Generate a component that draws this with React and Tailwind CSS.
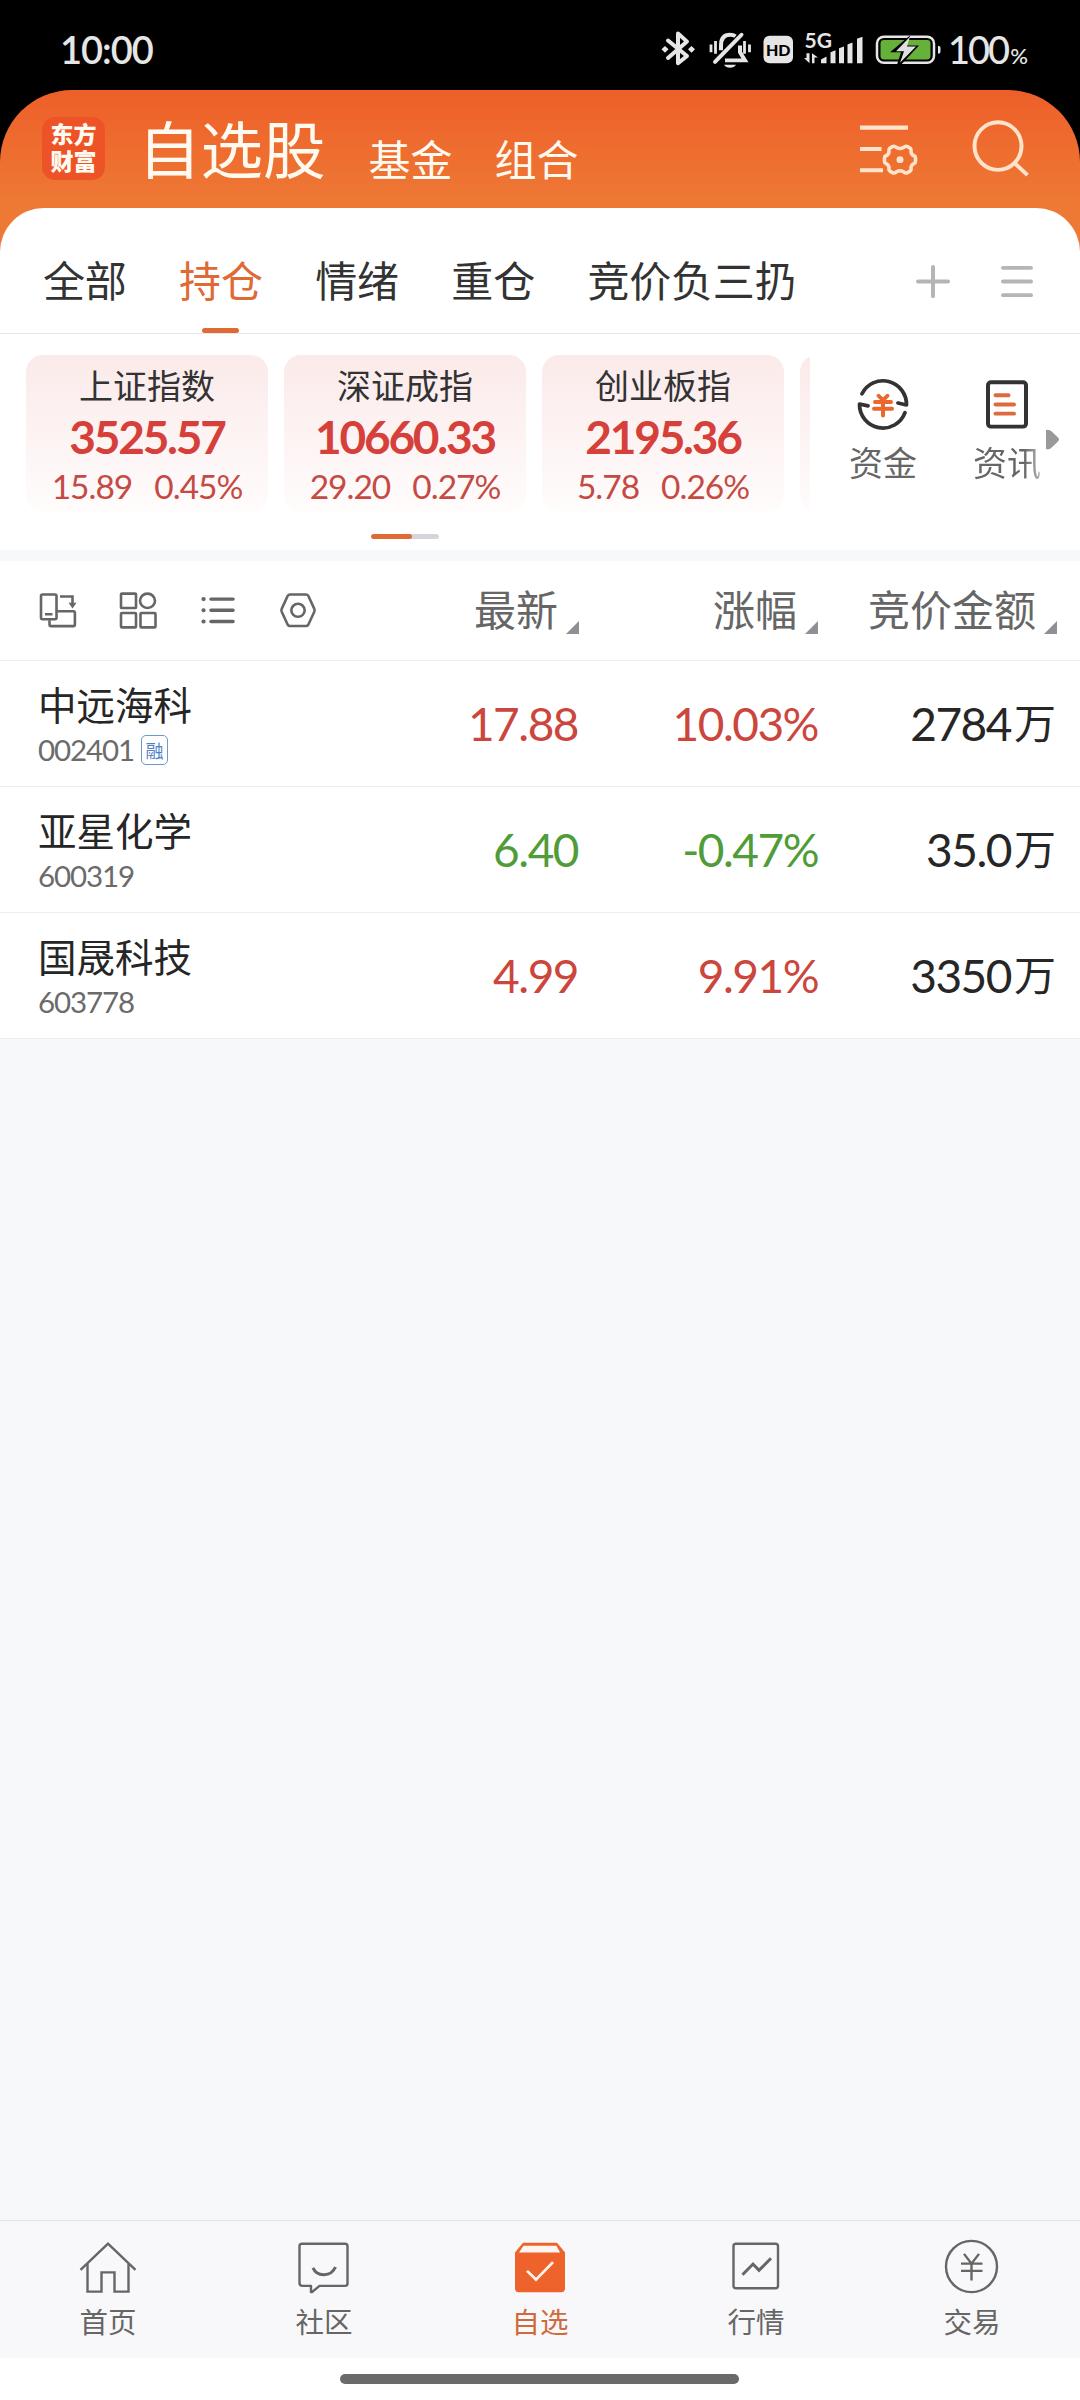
const indices = [
  { name: '上证指数', value: '3525.57', change: '15.89', percent: '0.45%' },
  { name: '深证成指', value: '10660.33', change: '29.20', percent: '0.27%' },
  { name: '创业板指', value: '2195.36', change: '5.78', percent: '0.26%' },
]

const stocks = [
  { name: '中远海科', code: '002401', margin: true, price: '17.88', percent: '10.03%', amount: '2784', up: true },
  { name: '亚星化学', code: '600319', price: '6.40', percent: '-0.47%', amount: '35.0', up: false },
  { name: '国晟科技', code: '603778', price: '4.99', percent: '9.91%', amount: '3350', up: true },
]

const groups = ['全部', '持仓', '情绪', '重仓', '竞价负三扔']

function StatusBar() {
  return (
    <div className="flex h-[90px] shrink-0 items-start bg-black pt-[28px] pl-[60px] text-[#e6e6e6]">
      <div className="h-[44px] w-[598px] font-['Lato','Noto_Sans_CJK_SC',sans-serif] text-[38px] leading-[43px] font-semibold tracking-[-1px]">10:00</div>
      <svg width="288" height="44.5" viewBox="658 29 288 46" preserveAspectRatio="none" fill="none" stroke="#e6e6e6" strokeWidth="4">
        {/* bluetooth */}
        <path d="M668 42 687 58 678 65.500V34.500L687 43 668 60" strokeLinejoin="round" strokeLinecap="round" />
        <path d="M661.5 51l3.500-3.500 3.500 3.500-3.500 3.500zM688 51l3.500-3.500 3.500 3.500-3.500 3.500z" fill="#e6e6e6" stroke="none" />
        {/* muted bell */}
        <path d="M741.500 36 715 64" strokeLinecap="round" />
        <path d="M721 52V47Q721 36 730 36q3.500 0 5.500 1.500M740 47v7l5 8.500H725" strokeWidth="4" />
        <path d="M724 67h12c-2 4-10 4-12 0z" fill="#e6e6e6" stroke="none" />
        <path d="M711 46v8M715.500 42.500v13M744.500 42.500v13M749.500 46v8" strokeWidth="2.800" />
        <rect x="763.500" y="37" width="29.500" height="28.500" rx="6" fill="#e6e6e6" stroke="none" />
        <text x="778.200" y="57.500" textAnchor="middle" fontSize="16" fontWeight="900" fontFamily="Lato" fill="#000" stroke="none">HD</text>
        <text x="804.500" y="50" fontSize="21" fontWeight="700" fontFamily="Lato" fill="#e6e6e6" stroke="none">5G</text>
        <path d="M804 60h2.500v-5h3v10.500zM812 65.500h2.500v-6h3.500L812 55z" fill="#e6e6e6" stroke="none" />
        <path d="M821 65.500v-4l5.500-3v7zM830.500 65.500V54l5-2v13.500zM839 65.500V50l5-2v17.500zM847.500 65.500V46l5-2v21.500zM857 65.500V40l5.500-2v27.500z" fill="#e6e6e6" stroke="none" />
        {/* battery */}
        <rect x="877" y="38" width="57" height="27" rx="7" strokeWidth="2.500" />
        <rect x="880.500" y="41.500" width="50" height="20" rx="3.500" fill="#65b13a" stroke="none" />
        <path d="M938 47.500c2.500 0 2.500 1 2.500 4s0 4-2.500 4z" fill="#e6e6e6" stroke="none" />
        <path d="M912 35 890 54h11l-4 13h4l18-20h-13l5-12z" fill="#000" stroke="none" />
        <path d="M910 38 896 53h8l-4 12 16-17h-9z" fill="#e0e0e0" stroke="none" />
      </svg>
      <div className="flex items-baseline font-['Lato','Noto_Sans_CJK_SC',sans-serif]">
        <span className="ml-[2px] text-[38px] leading-[43px] font-medium tracking-[-2px]">100</span>
        <span className="ml-[2px] text-[22px] font-medium">%</span>
      </div>
    </div>
  )
}

function Header() {
  return (
    <div className="shrink-0 bg-black">
      <header className="flex h-[168px] items-start rounded-t-[72px] bg-linear-to-b from-[#ee5f29] to-[#ee7935] to-70% pl-[42px] text-[#fffaf0]">
        <div className="mt-[27px] flex h-[63px] w-[63px] justify-center rounded-[13px] bg-[#ee5328] pt-[3px]">
          <div className="w-[47px] text-center text-[23px] leading-[27px] font-black break-all">东方财富</div>
        </div>
        <h1 className="mt-[17px] ml-[33px] text-[62.500px] leading-[80px]">自选股</h1>
        <nav className="mt-[38px] ml-[43px] flex gap-[42px] text-[42px] leading-[60px]">
          <span>基金</span>
          <span>组合</span>
        </nav>
        <svg className="mt-[26px] ml-[278px]" width="62" height="64" viewBox="0 0 62 66" preserveAspectRatio="none" fill="none" stroke="#ffe3cb" strokeWidth="4.200">
          <path d="M3 12h48M3 34h21.500M3 56h23" />
          <path
            d="M35.500 31.500q2-1 4 1 3.500 2 7 0 2-2 4-1l3 2q1 1 .5 3.500.5 3 3 4 1.500.5 1.500 2v4q0 1.500-1.500 2-2.500 1-3 4 .5 2.500-.5 3.500l-3 2q-2 1-4-1-3.500-2-7 0-2 2-4 1l-3-2q-1-1-.5-3.500-.5-3-3-4-1.500-.5-1.500-2v-4q0-1.500 1.500-2 2.500-1 3-4-.5-2.500.5-3.500z"
            strokeLinejoin="round"
            strokeWidth="3.600"
          />
          <circle cx="43" cy="45" r="3.500" fill="#ffe3cb" stroke="none" />
        </svg>
        <svg className="mt-[26px] ml-[49px]" width="66" height="64" viewBox="0 0 66 66" preserveAspectRatio="none" fill="none" stroke="#ffe3cb" strokeWidth="4">
          <ellipse cx="30" cy="31" rx="23.500" ry="24.500" />
          <path d="M46.500 48.500 59.500 61" />
        </svg>
      </header>
    </div>
  )
}

function GroupTabs() {
  return (
    <div className="-mt-[50px] flex h-[126px] shrink-0 rounded-t-[44px] border-b border-[#e6e8ea] bg-white pl-[43px]">
      <div className="flex w-[868px] gap-[52.500px] text-[42px] leading-[60px] tracking-[-0.2px] text-[#333]">
        {groups.map((g) => (
          <div key={g} className={g === '持仓' ? 'flex flex-col items-center text-[#e06a36]' : ''}>
            <div className="mt-[41px]">{g}</div>
            {g === '持仓' && <div className="mt-[19px] h-[5px] w-[37px] rounded-full bg-[#e06a36]" />}
          </div>
        ))}
      </div>
      <svg className="mt-[53px]" width="126" height="41" viewBox="0 0 126 42" preserveAspectRatio="none" stroke="#b5b5b5" strokeWidth="4" strokeLinecap="round">
        <path d="M7 21h30M22 6v30M92 7h28M92 21h28M92 35h28" />
      </svg>
    </div>
  )
}

function IndexCard({ item }) {
  return (
    <div className="flex h-[157px] w-[242px] shrink-0 flex-col items-center rounded-[17px] bg-linear-to-b from-[#fbeaea] to-[#fffcfc]">
      <div className="mt-[7px] text-[34px] leading-[46px] text-[#333]">{item.name}</div>
      <div className="mt-[4px] font-['Lato','Noto_Sans_CJK_SC',sans-serif] text-[46px] leading-[50px] font-bold tracking-[-2.2px] text-[#d5413a]">{item.value}</div>
      <div className="mt-[6px] flex gap-[22px] font-['Lato','Noto_Sans_CJK_SC',sans-serif] text-[33.500px] leading-[36px] tracking-[-1px] text-[#c44a43]">
        <span>{item.change}</span>
        <span>{item.percent}</span>
      </div>
    </div>
  )
}

function Overview() {
  return (
    <section className="h-[216px] shrink-0 bg-white pt-[21px]">
      <div className="flex">
        <div className="flex w-[810px] gap-[16px] overflow-hidden pl-[26px]">
          {indices.map((item) => <IndexCard key={item.name} item={item} />)}
          <div className="h-[157px] w-[242px] shrink-0 rounded-[17px] bg-linear-to-b from-[#fbeaea] to-[#fffcfc]" />
        </div>
        <div className="mt-[19px] ml-[39px] flex w-[68px] flex-col items-center text-[34px] leading-[48px] text-[#666]">
          <svg width="60" height="58" viewBox="0 0 60 60" preserveAspectRatio="none" fill="none" stroke="#333" strokeWidth="3.800" strokeLinejoin="round" strokeLinecap="round">
            <path d="M9 20.500A23.500 24.500 0 0 1 53.500 32L45 30M52 40A23.500 24.500 0 0 1 6.500 31L15 33" />
            <path d="M25.500 22.500 30 27l4.500-4.500M22 29h16M21 36h18M30 28v15" stroke="#ea682f" strokeWidth="4" />
          </svg>
          <div className="mt-[6px]">资金</div>
        </div>
        <div className="mt-[19px] ml-[56px] flex w-[68px] flex-col items-center text-[34px] leading-[48px]">
          <svg width="60" height="58" viewBox="0 0 60 60" preserveAspectRatio="none" fill="none" stroke="#333" strokeWidth="4">
            <rect x="11" y="8.500" width="38" height="46" rx="3" />
            <path d="M18.500 22h13M18.500 31.500h18.500M18.500 41h18.500" stroke="#dd6b3b" strokeLinecap="round" />
          </svg>
          <div className="mt-[6px] bg-linear-to-r from-[#666] from-75% to-[#bbb] bg-clip-text text-transparent">资讯</div>
        </div>
        <svg className="mt-[74px] ml-[4px]" width="16" height="21" viewBox="0 0 16 22" preserveAspectRatio="none">
          <path d="M1 1q4-1 7 3l5 5q2 2 0 4l-5 5q-3 4-7 3z" fill="#999" />
        </svg>
      </div>
      <div className="mt-[22px] ml-[371px] h-[5px] w-[68px] overflow-hidden rounded-full bg-[#d5d6dc]">
        <div className="h-full w-[41px] rounded-full bg-[#e06a36]" />
      </div>
    </section>
  )
}

function SortLabel({ children }) {
  return (
    <div className="flex items-end justify-end gap-[8px]">
      <span className="text-[42px] leading-[60px]">{children}</span>
      <svg className="mb-[4px]" width="13" height="13" viewBox="0 0 13 13">
        <path d="M13 0v13H0z" fill="#8f8f95" />
      </svg>
    </div>
  )
}

function TableHead() {
  return (
    <div className="grid h-[100px] grid-cols-[340px_239px_239px_239px] items-center border-b border-[#eceded] pb-[6px] text-[#666]">
      <svg className="mt-[9px] ml-[36px] self-start" width="284" height="81" viewBox="36 577 284 84" preserveAspectRatio="none" fill="none" stroke="#666" strokeWidth="2.600">
        <rect x="41" y="602.500" width="15.500" height="25.500" rx="1.500" />
        <path d="M45 623h7.500M60 604.500h12.500v8M49.500 629v4.500q0 1.700 1.700 1.700h22q1.700 0 1.700-1.700v-12q0-1.700-1.700-1.700H57" />
        <path d="M68.500 611h8L72.500 617z" fill="#666" stroke="none" />
        <rect x="121" y="601.500" width="15" height="15" rx="1" />
        <circle cx="147.500" cy="609" r="7.500" />
        <rect x="121" y="621.500" width="15" height="15" rx="1" />
        <rect x="140.500" y="621.500" width="15" height="15" rx="1" />
        <path d="M211 607.200h22M211 618.800h22M211 630.500h22" strokeWidth="3.600" strokeLinecap="round" />
        <path d="M203.500 607.200h.1M203.500 618.800h.1M203.500 630.500h.1" strokeWidth="4.200" strokeLinecap="round" />
        <path d="M290 602.500h16q1.500 0 2.300 1.300l6 13.500q.8 1.500 0 3l-6 13.500q-.8 1.300-2.300 1.300h-16q-1.500 0-2.300-1.300l-6-13.500q-.8-1.500 0-3l6-13.500q.8-1.300 2.300-1.300z" />
        <circle cx="298" cy="618.800" r="6.700" />
      </svg>
      <SortLabel>最新</SortLabel>
      <SortLabel>涨幅</SortLabel>
      <SortLabel>竞价金额</SortLabel>
    </div>
  )
}

function StockRow({ stock }) {
  const color = stock.up ? 'text-[#cb463d]' : 'text-[#4f9c38]'
  return (
    <div className="grid h-[126px] grid-cols-[340px_238px_240px_238px] border-b border-[#eceded] font-['Lato','Noto_Sans_CJK_SC',sans-serif] text-[46px] leading-[60px] tracking-[-1.5px]">
      <div className="pt-[16px] pl-[38px]">
        <div className="font-['Noto_Sans_CJK_SC',sans-serif] text-[38.500px] leading-[52px] tracking-normal text-[#262626]">{stock.name}</div>
        <div className="mt-[6px] flex h-[30px] items-center gap-[7px] text-[29.500px] leading-[30px] tracking-[-1.100px] text-[#6b6b6b]">
          <span>{stock.code}</span>
          {stock.margin && (
            <span className="flex h-[30px] w-[27px] items-center justify-center rounded-[5px] border border-[#6c97cf] font-['Noto_Sans_CJK_SC',sans-serif] text-[18px] tracking-normal text-[#4f83c8]">融</span>
          )}
        </div>
      </div>
      <div className={`pt-[33px] text-right ${color}`}>{stock.price}</div>
      <div className={`pt-[33px] text-right ${color}`}>{stock.percent}</div>
      <div className="pt-[33px] text-right text-[#262626]">
        {stock.amount}
        <span className="ml-[3px] align-[2px] text-[42px] leading-[40px] tracking-normal">万</span>
      </div>
    </div>
  )
}

function NavItem({ label, active, children }) {
  return (
    <div className={`flex w-[216px] flex-col items-center text-[28.500px] leading-[40px] ${active ? 'text-[#cf6a3c]' : 'text-[#666]'}`}>
      <svg className="mt-[14px]" width="64" height="62" viewBox="0 0 64 64" preserveAspectRatio="none" fill="none" stroke="currentColor" strokeWidth="2.400">
        {children}
      </svg>
      <div className="mt-[4px]">{label}</div>
    </div>
  )
}

function BottomNav() {
  return (
    <div className="flex h-[138px] shrink-0 border-t border-[#e1e3e6] bg-[#f8f8fa]">
      <NavItem label="首页">
        <path d="M4.500 36 32 9l27.500 27" />
        <path d="M11.500 30v28.500h14V38.500h13v20h14V30" />
      </NavItem>
      <NavItem label="社区">
        <path d="M10 9h43q2.500 0 2.500 2.500V50q0 2.500-2.500 2.500H27.500L20 59h-1v-6.500h-8.500q-3 0-3-3V11.500Q7.500 9 10 9z" strokeLinejoin="round" />
        <path d="M21 34c4 9.500 18 9.500 22.500-1" strokeWidth="3" />
      </NavItem>
      <NavItem label="自选" active>
        <path d="M7 18 15 8h34l8 10v37q0 4-4 4H11q-4 0-4-4z" fill="#ee622b" stroke="none" />
        <path d="M15.500 11h33l3.500 7H11z" fill="#fff6ef" stroke="none" />
        <path d="M19 37l9 9 17-18" stroke="#fff3ea" strokeWidth="2.800" />
      </NavItem>
      <NavItem label="行情">
        <rect x="9.500" y="9" width="44.500" height="46" rx="2.500" />
        <path d="M18.500 41 29 30l6 6.500L47 24" strokeWidth="3" />
      </NavItem>
      <NavItem label="交易">
        <ellipse cx="31.500" cy="32.500" rx="25.500" ry="26.500" />
        <path d="M24 19.500l7.500 10L39 19.500M21 29.500h21.500M21 37h21.500M31.500 29.500V47" />
      </NavItem>
    </div>
  )
}

export default function App() {
  return (
    <div className="flex h-[2400px] w-[1080px] flex-col overflow-hidden bg-[#f7f8fa] font-['Noto_Sans_CJK_SC',sans-serif]">
      <StatusBar />
      <Header />
      <GroupTabs />
      <Overview />
      <div className="h-[11px] shrink-0 bg-[#f7f8fa]" />
      <main className="shrink-0 bg-white">
        <TableHead />
        {stocks.map((s) => <StockRow key={s.code} stock={s} />)}
      </main>
      <div className="grow" />
      <BottomNav />
      <div className="flex h-[42px] shrink-0 justify-center bg-white pt-[16px] pr-px">
        <div className="h-[10px] w-[399px] rounded-full bg-[#6a6a6a]" />
      </div>
    </div>
  )
}
